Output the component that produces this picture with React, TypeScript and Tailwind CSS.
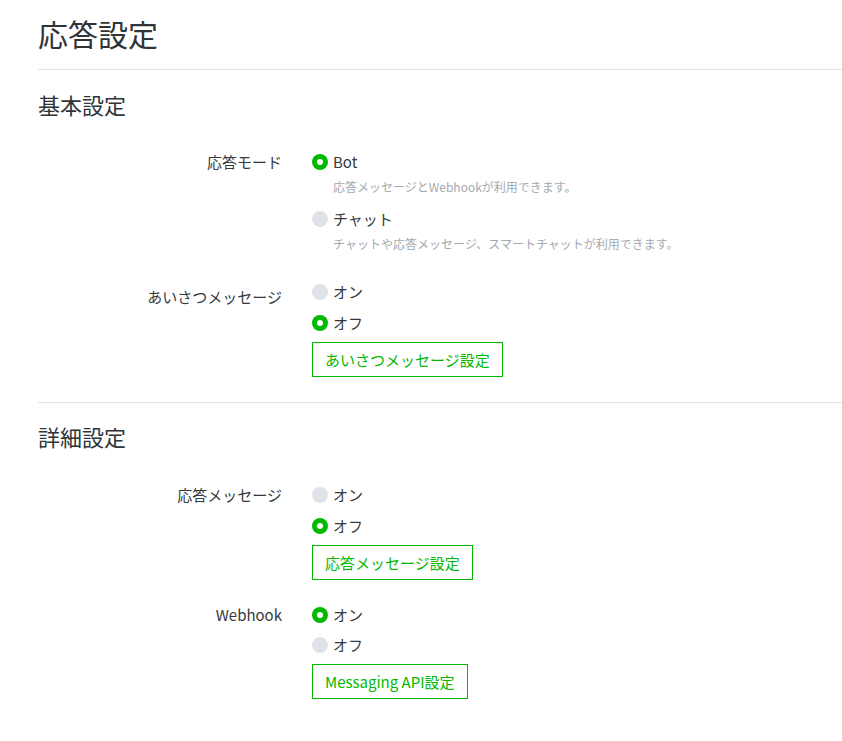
import React from "react";

const font = { fontFamily: '"Noto Sans CJK JP", "Noto Sans", sans-serif' };

function Radio({ checked, label }: { checked: boolean; label: string }) {
  return (
    <div className="flex items-center h-[20px]">
      {checked ? (
        <span className="w-[16px] h-[16px] rounded-full bg-[#00b900] flex items-center justify-center shrink-0">
          <span className="w-[6px] h-[6px] rounded-full bg-white" />
        </span>
      ) : (
        <span className="w-[16px] h-[16px] rounded-full bg-[#dfe2e7] shrink-0" />
      )}
      <span className="ml-[5px] text-[15px] leading-[20px] text-[#353a40]">{label}</span>
    </div>
  );
}

function Btn({ children }: { children: React.ReactNode }) {
  return (
    <button className="h-[35px] px-[12px] border border-[#00b900] text-[#00b900] text-[15px] leading-[20px] bg-white self-start">
      {children}
    </button>
  );
}

function Row({ label, labelPt = 0, children }: { label: string; labelPt?: number; children: React.ReactNode }) {
  return (
    <div className="flex">
      <div
        className="w-[244px] text-right text-[15px] leading-[20px] text-[#353a40]"
        style={{ paddingTop: labelPt }}
      >
        {label}
      </div>
      <div className="ml-[30px] flex flex-col">{children}</div>
    </div>
  );
}

export default function App() {
  return (
    <div className="bg-white min-h-[741px] pl-[38px]" style={font}>
      <h1 className="pt-[14px] text-[30px] leading-[38px] text-[#2f3438] font-normal">応答設定</h1>
      <div className="mt-[17px] border-t border-[#e3e4e6]" />

      <h2 className="mt-[19px] text-[22px] leading-[30px] text-[#2f3438] font-normal">基本設定</h2>

      <div className="mt-[33px]">
        <Row label="応答モード">
          <Radio checked label="Bot" />
          <div className="mt-[7px] ml-[21px] text-[12px] leading-[16px] text-[#a4a9b0]">
            応答メッセージとWebhookが利用できます。
          </div>
          <div className="mt-[14px]">
            <Radio checked={false} label="チャット" />
          </div>
          <div className="mt-[7px] ml-[21px] text-[12px] leading-[16px] text-[#a4a9b0]">
            チャットや応答メッセージ、スマートチャットが利用できます。
          </div>
        </Row>
      </div>

      <div className="mt-[30px]">
        <Row label="あいさつメッセージ" labelPt={5}>
          <Radio checked={false} label="オン" />
          <div className="mt-[11px]">
            <Radio checked label="オフ" />
          </div>
          <div className="mt-[9px] flex">
            <Btn>あいさつメッセージ設定</Btn>
          </div>
        </Row>
      </div>

      <div className="mt-[25px] border-t border-[#e3e4e6]" />

      <h2 className="mt-[18px] text-[22px] leading-[30px] text-[#2f3438] font-normal">詳細設定</h2>

      <div className="mt-[34px]">
        <Row label="応答メッセージ" labelPt={0}>
          <Radio checked={false} label="オン" />
          <div className="mt-[11px]">
            <Radio checked label="オフ" />
          </div>
          <div className="mt-[9px] flex">
            <Btn>応答メッセージ設定</Btn>
          </div>
        </Row>
      </div>

      <div className="mt-[25px]">
        <Row label="Webhook">
          <Radio checked label="オン" />
          <div className="mt-[10px]">
            <Radio checked={false} label="オフ" />
          </div>
          <div className="mt-[9px] flex">
            <Btn>Messaging API設定</Btn>
          </div>
        </Row>
      </div>
    </div>
  );
}
